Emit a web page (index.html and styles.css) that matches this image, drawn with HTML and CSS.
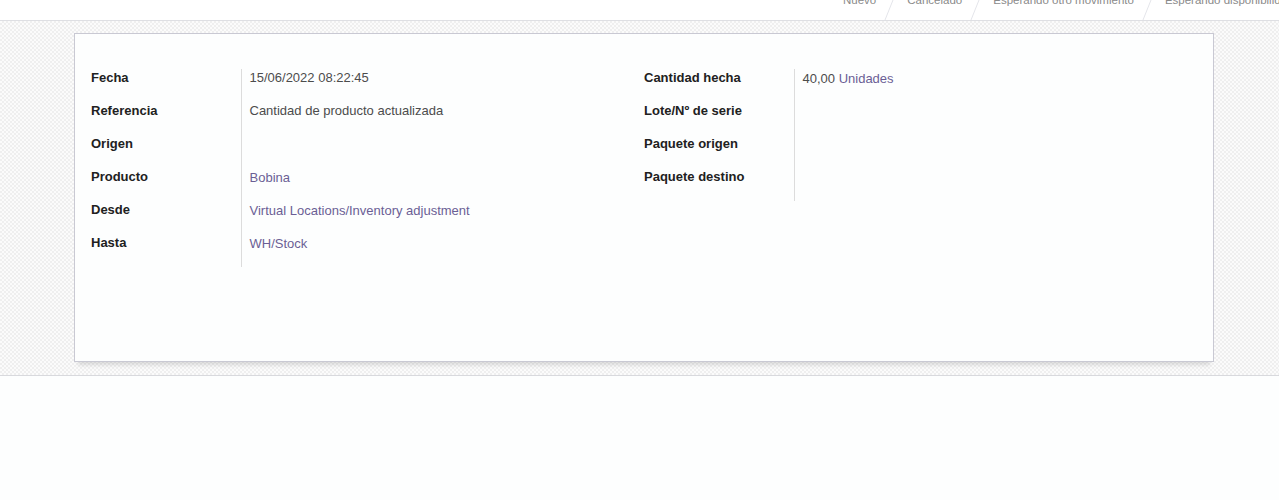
FILE: index.html
```html
<!DOCTYPE html>
<html>

<head>
    <meta charset="UTF-8" />
    <title>Movimiento de stock</title>
    <link rel="stylesheet" href="styles.css">
</head>

<body>
    <div class="statusbar">
        <div class="status-list">
            <span class="status">Nuevo</span>
            <svg class="sep" width="10" height="40" viewBox="0 0 10 40"><path d="M1 0 L9 20 L1 40" fill="none" stroke="#e4e5ea" stroke-width="1"/></svg>
            <span class="status">Cancelado</span>
            <svg class="sep" width="10" height="40" viewBox="0 0 10 40"><path d="M1 0 L9 20 L1 40" fill="none" stroke="#e4e5ea" stroke-width="1"/></svg>
            <span class="status">Esperando otro movimiento</span>
            <svg class="sep" width="10" height="40" viewBox="0 0 10 40"><path d="M1 0 L9 20 L1 40" fill="none" stroke="#e4e5ea" stroke-width="1"/></svg>
            <span class="status">Esperando disponibilidad</span>
        </div>
    </div>
    <div class="sheet-bg">
        <div class="sheet">
            <div class="group">
                <table class="inner-group">
                    <tr><td class="label">Fecha</td><td class="value">15/06/2022 08:22:45</td></tr>
                    <tr><td class="label">Referencia</td><td class="value">Cantidad de producto actualizada</td></tr>
                    <tr><td class="label">Origen</td><td class="value"></td></tr>
                    <tr><td class="label">Producto</td><td class="value"><a href="#">Bobina</a></td></tr>
                    <tr><td class="label">Desde</td><td class="value"><a href="#">Virtual Locations/Inventory adjustment</a></td></tr>
                    <tr><td class="label">Hasta</td><td class="value"><a href="#">WH/Stock</a></td></tr>
                </table>
                <table class="inner-group">
                    <tr><td class="label">Cantidad hecha</td><td class="value">40,00 <a href="#">Unidades</a></td></tr>
                    <tr><td class="label">Lote/Nº de serie</td><td class="value"></td></tr>
                    <tr><td class="label">Paquete origen</td><td class="value"></td></tr>
                    <tr><td class="label">Paquete destino</td><td class="value"></td></tr>
                </table>
            </div>
        </div>
    </div>
</body>

</html>
```

FILE: styles.css
```css
* {
    margin: 0;
    padding: 0;
    box-sizing: border-box;
}

body {
    background: #fdfefe;
    font-family: "Liberation Sans", Arial, sans-serif;
    font-size: 13px;
    color: #4c4c4c;
}

.statusbar {
    height: 21px;
    background: #fff;
    border-bottom: 1px solid #dedfe3;
    overflow: hidden;
}

.status-list {
    display: flex;
    align-items: center;
    height: 40px;
    margin-top: -20px;
    padding-left: 843px;
    white-space: nowrap;
}

.status {
    color: #8a8a8a;
    font-size: 11.5px;
}

.sep {
    margin: 0 13px 0 8px;
    flex-shrink: 0;
}

.sheet-bg {
    height: 355px;
    padding-top: 12px;
    border-bottom: 1px solid #d8d9dd;
    background: repeating-conic-gradient(#efefef 0 25%, #fbfbfb 0 50%) 0 0 / 4px 4px;
}

.sheet {
    width: 1140px;
    height: 329px;
    margin-left: 74px;
    padding: 35px 16px 0 16px;
    background: #fdfefe;
    border: 1px solid #c9c9d3;
    box-shadow: 0 7px 4px -4px rgba(0, 0, 0, 0.12);
}

.group {
    display: flex;
}

.inner-group {
    width: 553px;
    border-collapse: collapse;
    align-self: flex-start;
}

.inner-group td {
    height: 33px;
    vertical-align: top;
    padding-top: 1px;
}

.label {
    width: 150px;
    font-weight: bold;
    color: #212121;
}

.value {
    border-left: 1px solid #dcdcdc;
    padding-left: 8px;
}

.value a {
    display: inline-block;
    margin-top: 1px;
}

a {
    color: #6b5e95;
    text-decoration: none;
}
```
